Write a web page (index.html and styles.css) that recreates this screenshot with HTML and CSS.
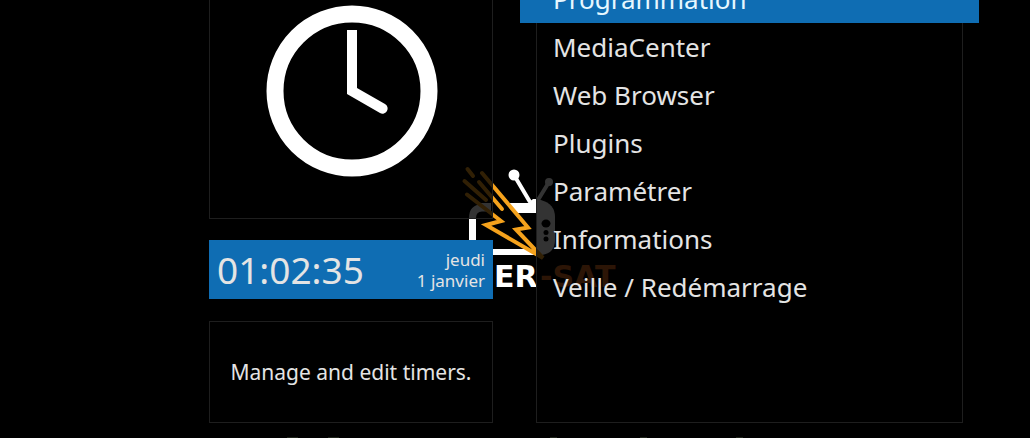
FILE: index.html
```html
<!DOCTYPE html>
<html lang="fr">
<head>
<meta charset="utf-8">
<title>Menu principal</title>
<link rel="stylesheet" href="styles.css">
</head>
<body>
<svg class="logo" width="170" height="130" viewBox="455 160 170 130" aria-hidden="true">
  <path d="M472.500 254V218Q472.500 208 482 208H538" fill="none" stroke="#fff" stroke-width="7"/>
  <path d="M479 203H528L533 199H540V213H490Z" fill="#fff"/>
  <path d="M469 252H540" stroke="#fff" stroke-width="6"/>
  <path d="M536 200H541Q555 204 555 217V240Q555 253 542 255H536Z" fill="#fff"/>
  <g stroke="#fff" stroke-width="4" fill="#fff">
    <path d="M514 175L530 202M549 182L538 200"/>
    <circle cx="514" cy="175" r="3.500"/>
    <circle cx="549" cy="182" r="2"/>
  </g>
  <ellipse cx="546" cy="223.500" rx="4.500" ry="4"/>
  <circle cx="546" cy="232.500" r="2.500"/>
  <circle cx="546" cy="239" r="2.500"/>
  <path d="M491 184L528 227L517 230L543 258L486 225L502 221L491 212Z" fill="#000"/>
  <g fill="none" stroke="#f5a21c" stroke-width="4" stroke-linecap="round">
    <path d="M482 173L528 227.500L516 229.500L543 258L486 225L501 221L467 194.500"/>
    <path d="M467.500 169L473 176M464.500 181L486 200M479 182L502 209"/>
  </g>
  <text class="logo-text" x="494" y="287" fill="#fff">ER<tspan x="540" fill="#dd6a22">-SAT</tspan></text>
</svg>
<main class="screen">
  <section class="side">
    <div class="panel preview">
      <svg width="172" height="172" viewBox="0 0 172 172" role="img" aria-label="Horloge">
        <circle cx="86" cy="86" r="77" fill="none" stroke="#fff" stroke-width="17"/>
        <path d="M81 25H91V83L119 99A4.800 4.800 0 0 1 114 108L81 89Z" fill="#fff"/>
      </svg>
    </div>
    <div class="clock">
      <time class="time">01:02:35</time>
      <div class="date">jeudi<br>1 janvier</div>
    </div>
    <p class="panel description">Manage and edit timers.</p>
  </section>
  <nav class="panel menu">
    <a class="item selected" href="#programmation" aria-current="true">Programmation</a>
    <a class="item" href="#mediacenter">MediaCenter</a>
    <a class="item" href="#web">Web Browser</a>
    <a class="item" href="#plugins">Plugins</a>
    <a class="item" href="#parametrer">Paramétrer</a>
    <a class="item" href="#informations">Informations</a>
    <a class="item" href="#veille">Veille / Redémarrage</a>
  </nav>
</main>
<svg class="footer-marks" width="460" height="1" viewBox="285 0 460 1" aria-hidden="true">
  <path d="M287 .500H298M328 .500H339M550 .500H557M640 .500H647M736 .500H743" stroke="#20251c"/>
</svg>
</body>
</html>
```

FILE: styles.css
```css
* {
  box-sizing: border-box;
}

body {
  position: relative;
  margin: 0;
  overflow: hidden;
  background: #000;
  color: #e4e4e4;
  font-family: "Noto Sans", "Open Sans", sans-serif;
}

.screen {
  position: relative;
  display: grid;
  grid-template-columns: 284fr 427fr;
  column-gap: 43px;
  padding: 0 67px 0 209px;
}

.side {
  display: flex;
  flex-direction: column;
}

.panel {
  border: 1px solid #1e1e1e;
  border-top: 0;
  background: rgba(0, 0, 0, 0.8);
}

.preview {
  display: flex;
  justify-content: center;
  padding: 5px 0 41px 2px;
}

.preview svg {
  display: block;
}

.clock {
  display: flex;
  align-items: center;
  justify-content: space-between;
  margin: 21px 0 22px;
  padding: 0 8px;
  background: #0f6db3;
}

.time {
  font-size: 37px;
  line-height: 59px;
}

.date {
  font-size: 17px;
  line-height: 21px;
  text-align: right;
}

.description {
  margin: 0;
  padding: 0 16px;
  border-top: 1px solid #1e1e1e;
  font-size: 21px;
  line-height: 100px;
  text-align: center;
  white-space: nowrap;
}

.menu {
  display: flex;
  flex-direction: column;
}

.item {
  padding: 0 16px;
  color: inherit;
  font-size: 26px;
  line-height: 48px;
  text-decoration: none;
}

.selected {
  margin: -25px -17px 0;
  padding: 0 33px;
  background: #0f6db3;
  color: #e6f7ff;
}

.logo {
  position: absolute;
  top: 160px;
  left: calc(50% - 60px);
}

.logo-text {
  font-family: "DejaVu Sans", sans-serif;
  font-size: 30px;
  font-weight: 700;
}

.footer-marks {
  display: block;
  margin: 14px 0 0 285px;
}
```
